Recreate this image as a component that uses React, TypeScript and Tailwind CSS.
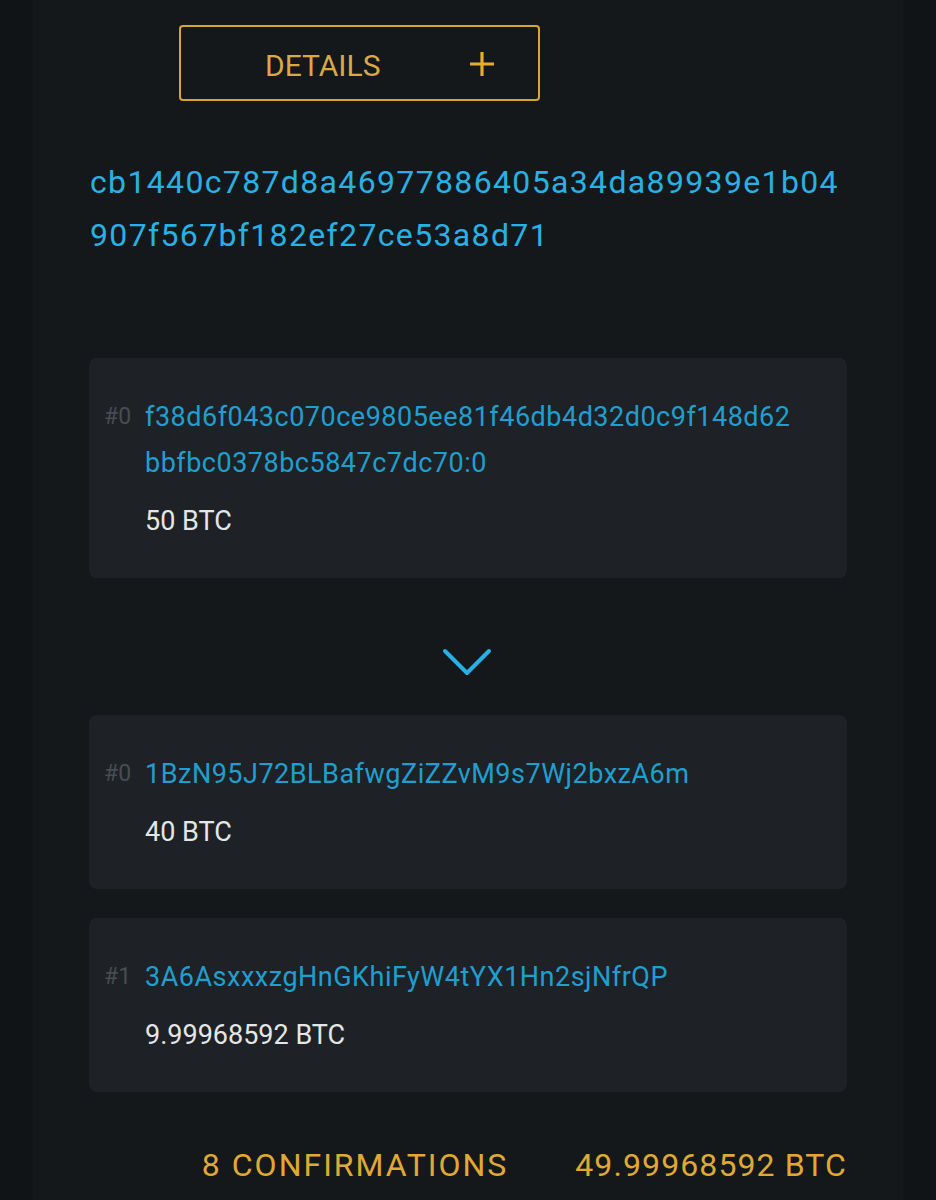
import React from "react";

const font = { fontFamily: "Roboto, 'Noto Sans', sans-serif" };

function Card({
  idx,
  lines,
  amount,
}: {
  idx: string;
  lines: string[];
  amount: string;
}) {
  return (
    <div className="rounded-[8px] bg-[#1e2226] pl-[15px] pr-4 pt-[36px] pb-[34px]">
      <div className="flex">
        <div className="w-[41px] shrink-0 text-[23px] leading-[46px] text-[#474d52]">{idx}</div>
        <div className="text-[27px] leading-[46px] tracking-[0.5px] text-[#1f9fcf]">
          {lines.map((l) => (
            <div key={l}>{l}</div>
          ))}
        </div>
      </div>
      <div className="mt-[12px] pl-[41px] text-[27px] leading-[46px] text-[#e4e6e8]">{amount}</div>
    </div>
  );
}

export default function App() {
  return (
    <div className="h-[1200px] overflow-hidden bg-[#101416]" style={font}>
      <div className="mx-[33px] h-[1200px] bg-[#14181b] px-[56px] pt-[25px]">
        <div className="ml-[90px] flex h-[76px] w-[361px] items-center rounded-[4px] border-2 border-[#d9a535]">
          <span className="ml-[84px] mt-[5px] text-[30px] leading-none text-[#d8a944]">DETAILS</span>
          <svg className="ml-[89px] mt-[2px]" width="26" height="26" viewBox="0 0 26 26">
            <path d="M13 1v24M1 13h24" stroke="#e6ad2c" strokeWidth="3.2" />
          </svg>
        </div>

        <div className="mt-[55px] pl-[1px] text-[32px] leading-[53px] tracking-[1.35px] text-[#27b1e4]">
          <div>cb1440c787d8a46977886405a34da89939e1b04</div>
          <div>907f567bf182ef27ce53a8d71</div>
        </div>

        <div className="mt-[96px]">
          <Card
            idx="#0"
            lines={["f38d6f043c070ce9805ee81f46db4d32d0c9f148d62", "bbfbc0378bc5847c7dc70:0"]}
            amount="50 BTC"
          />
        </div>

        <div className="flex justify-center pt-[70px] pb-[39px]">
          <svg width="50" height="28" viewBox="0 0 50 28" className="mr-[2px]">
            <path
              d="M3 3 L25 25 L47 3"
              fill="none"
              stroke="#28afe3"
              strokeWidth="4"
              strokeLinecap="round"
              strokeLinejoin="round"
            />
          </svg>
        </div>

        <div className="flex flex-col gap-[29px]">
          <Card idx="#0" lines={["1BzN95J72BLBafwgZiZZvM9s7Wj2bxzA6m"]} amount="40 BTC" />
          <Card idx="#1" lines={["3A6AsxxxzgHnGKhiFyW4tYX1Hn2sjNfrQP"]} amount="9.99968592 BTC" />
        </div>

        <div className="mt-[53px] flex justify-end gap-[67px] text-[32px] leading-[40px] text-[#e0a933]">
          <span className="tracking-[2px]">8 CONFIRMATIONS</span>
          <span className="tracking-[1.1px]">49.99968592 BTC</span>
        </div>
      </div>
    </div>
  );
}
